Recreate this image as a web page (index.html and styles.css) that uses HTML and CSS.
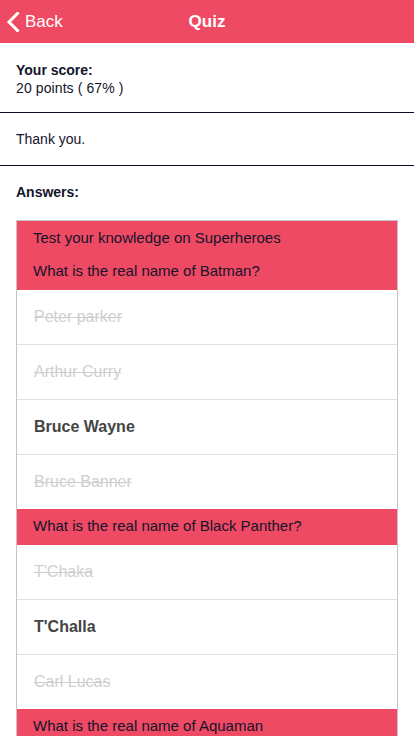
FILE: index.html
```html
<!DOCTYPE html>
<html>
<head>
<meta charset="utf-8">
<link rel="stylesheet" href="styles.css">
</head>
<body>
<header class="nav">
  <div class="back">
    <svg class="chev" width="14" height="20" viewBox="0 0 14 20"><polyline points="11.5,1.5 3,10 11.5,18.5" fill="none" stroke="#fff" stroke-width="3" stroke-linecap="square"/></svg>
    <span>Back</span>
  </div>
  <div class="title">Quiz</div>
  <div></div>
</header>
<section class="score">
  <div class="score-label">Your score:</div>
  <div class="score-value">20 points ( 67% )</div>
</section>
<section class="thanks">Thank you.</section>
<section class="answers">
  <div class="answers-label">Answers:</div>
  <div class="box">
    <div class="quiz-name">Test your knowledge on Superheroes</div>
    <div class="question">What is the real name of Batman?</div>
    <div class="answer wrong">Peter parker</div>
    <div class="answer wrong">Arthur Curry</div>
    <div class="answer right">Bruce Wayne</div>
    <div class="answer wrong">Bruce Banner</div>
    <div class="question">What is the real name of Black Panther?</div>
    <div class="answer wrong">T'Chaka</div>
    <div class="answer right">T'Challa</div>
    <div class="answer wrong">Carl Lucas</div>
    <div class="question">What is the real name of Aquaman</div>
  </div>
</section>
</body>
</html>
```

FILE: styles.css
```css
html, body {
  margin: 0;
  padding: 0;
  background: #fff;
  font-family: "Liberation Sans", Arial, sans-serif;
  color: #14142b;
}
.nav {
  height: 43px;
  background: #ef4a63;
  color: #fff;
  display: grid;
  grid-template-columns: 1fr auto 1fr;
  align-items: center;
}
.back {
  display: flex;
  align-items: center;
  padding-left: 6px;
  font-size: 17px;
  gap: 5px;
}
.chev { display: block; margin-top: 1px; }
.title {
  font-size: 17px;
  font-weight: bold;
}
.score {
  padding: 18px 16px 15px;
  font-size: 14px;
  line-height: 18px;
  border-bottom: 1px solid #0d0d2b;
}
.score-label { font-weight: bold; }
.score-value { letter-spacing: 0.1px; }
.thanks {
  padding: 17px 16px;
  font-size: 14px;
  line-height: 18px;
  border-bottom: 1px solid #0d0d2b;
}
.answers {
  padding: 17px 16px 0;
}
.answers-label {
  font-size: 14px;
  line-height: 18px;
  font-weight: bold;
  margin-bottom: 19px;
}
.box {
  border: 1px solid #c4c4c4;
}
.quiz-name {
  background: #ef4a63;
  font-size: 15px;
  line-height: 18px;
  padding: 8px 16px 7px;
}
.question {
  background: #ef4a63;
  font-size: 15px;
  line-height: 18px;
  padding: 8px 16px 10px;
}
.answer {
  height: 54px;
  display: flex;
  align-items: center;
  padding-left: 17px;
  font-size: 16px;
  line-height: 20px;
}
.answer + .answer {
  border-top: 1px solid #e0e0e0;
}
.wrong {
  color: #cfcfcf;
  text-decoration: line-through;
}
.right {
  color: #444;
  font-weight: bold;
}
```
